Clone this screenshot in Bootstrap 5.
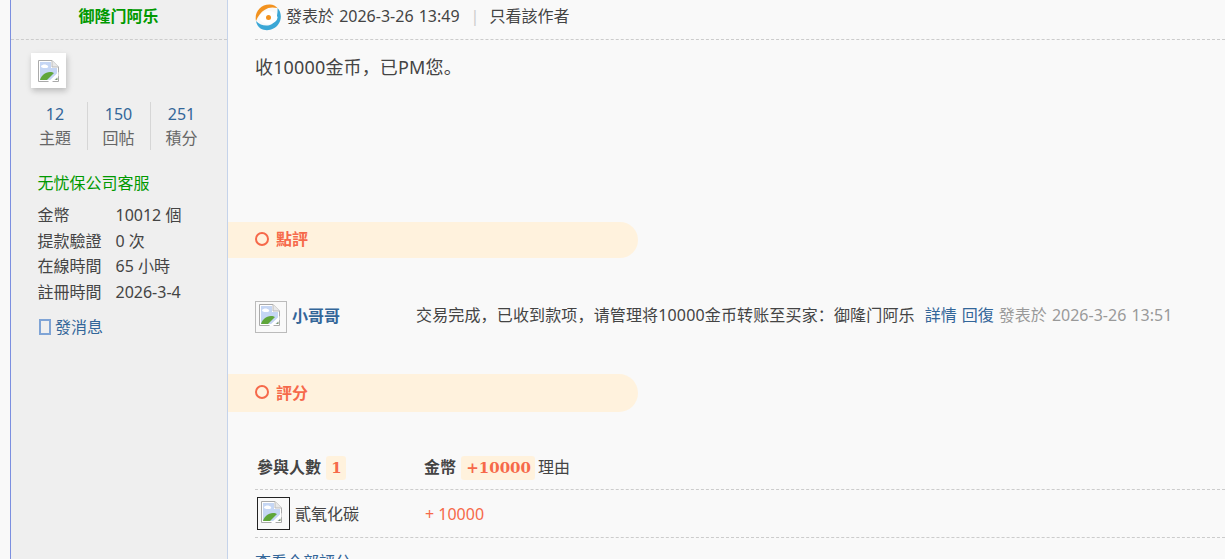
<!DOCTYPE html>
<html lang="zh-Hans"><head><meta charset="utf-8"><title>post</title>
<link href="https://cdn.jsdelivr.net/npm/bootstrap@5.3.0/dist/css/bootstrap.min.css" rel="stylesheet">
<style>
html,body{height:559px;overflow:hidden}
body{background:#f9f9f9;color:#444;font:16px/1.5 "Noto Sans","Noto Sans CJK SC",sans-serif}
a{color:#369;text-decoration:none}
.wrap{padding-left:10px;height:559px}
.side{width:218px;flex:none;background:#efefef;border-left:1px solid #7b8fe0;border-right:1px solid #c5d3ea}
.uname{height:40px;line-height:32px;border-bottom:1px dashed #ccc;color:#090;font-weight:700;text-align:center;padding-right:1px}
.avabox{width:35px;height:35px;margin:13px 0 14px 20px;background:#fff;box-shadow:1px 3px 6px rgba(0,0,0,.22);padding:7px}
.stats{padding-left:13px}
.stat{width:63px;height:48px;text-align:center;line-height:24px;color:#666;padding-right:1px}
.stat+.stat{border-left:1px solid #d6d6d6}
.stat a{display:block}
.grp{margin:21px 0 0 26.5px;color:#090;line-height:24px}
.info{margin:8px 0 0 26.5px;line-height:25.7px}
.info dt{font-weight:400;width:78px;float:left;clear:left}
.info dd{margin:0}
.pm{margin:9px 0 0 28px;display:flex;align-items:center;line-height:24px}
.pmbox{width:12px;height:16px;border:2px solid #7fa4d6;margin-right:4px}
.main{flex:1;min-width:0;padding-left:27px}
.phead{height:40px;border-bottom:1px dashed #ccc;display:flex;align-items:center;padding-bottom:8px}
.logo{flex:none;margin:4px 5px 0 0}
.ptime{word-spacing:1px}
.sep{color:#ccc;margin:0 10px 0 11px}
.msg{font-size:18px;line-height:27px;margin-top:14px;height:168px;letter-spacing:.15px}
.pill{margin-left:-27px;width:410px;height:36px;background:#fff2dd;border-radius:0 18px 18px 0;display:flex;align-items:center;padding:0 0 2px 27px;color:#f6694a;font-weight:700}
.pill2{height:38px;border-radius:0 19px 19px 0;margin-top:41px;padding-bottom:0}
.ring{width:14px;height:14px;border:2.5px solid #f6694a;border-radius:50%;margin:0 7px 1px 0}
.pill2 .ring{margin-bottom:2px}
.cmt{display:flex;align-items:center;margin-top:43px;height:32px;white-space:nowrap}
.cmt>a,.cmt>span{margin-bottom:4px}
.cava{width:32px;height:32px;border:1px solid #bbb;padding:2px 3px;margin-right:5px;flex:none}
.cname{width:124px;font-weight:700}
.cmt>.cname{margin-bottom:2px}
.ctext{letter-spacing:.15px}
.lnk1{margin-left:10px}
.lnk2{margin-left:5px}
.gray{color:#999;margin-left:5px;word-spacing:1px}
.rh{display:flex;align-items:center;height:44px;border-bottom:1px dashed #ccc;margin-top:34px;padding-left:2px;white-space:nowrap}
.rh b{color:#444}
.rc1{width:167px}
.tag{background:#fff2dd;color:#f6694a;font-family:"DejaVu Serif",serif;font-weight:700;font-size:15px;padding:3px 4px 3px 5px;margin:0 -1px 0 1px;border-radius:3px}
.rr{display:flex;align-items:center;height:48px;border-bottom:1px dashed #ccc;padding-left:2px}
.rava{width:33px;height:33px;border:1px solid #222;padding:3px;margin-right:5px;flex:none}
.rname{width:130px}
.orange{color:#f6694a}
.more{line-height:24px;margin-top:12px}
.ico{display:block}
</style></head><body>
<svg width="0" height="0" class="position-absolute"><defs><symbol id="broken" viewBox="0 0 21 22">
<path d="M.5.5H14L20.5 7v14.500H.5z" fill="#fff" stroke="#aaa"/><path d="M14 .5V7h6.500" fill="#e8e8e8" stroke="#bbb"/>
<path d="M2 2h11v6h6v12H2z" fill="#c5d6f4"/><path d="M3 6c2-2 5-2 7 0 1 2-2 2-3 2S3 8 3 6z" fill="#fff"/>
<path d="M2 20c1-4 5-8 10-8 2 0 3 .5 4 1l-7 7z" fill="#5fa63a"/><path d="M20.500 12 10 22h4l6.500-6z" fill="#fff"/><path d="M19.500 17.500V20H17z" fill="#7f9a6a"/></symbol></defs></svg>
<div class="wrap d-flex">
<aside class="side">
<div class="uname">御隆门阿乐</div>
<div class="avabox"><svg class="ico" width="21" height="22"><use href="#broken"/></svg></div>
<div class="stats d-flex">
<div class="stat"><a href="#">12</a>主題</div>
<div class="stat"><a href="#">150</a>回帖</div>
<div class="stat"><a href="#">251</a>積分</div>
</div>
<div class="grp">无忧保公司客服</div>
<dl class="info mb-0">
<dt>金幣</dt><dd>10012 個</dd>
<dt>提款驗證</dt><dd>0 次</dd>
<dt>在線時間</dt><dd>65 小時</dd>
<dt>註冊時間</dt><dd>2026-3-4</dd>
</dl>
<a class="pm" href="#"><span class="pmbox"></span>發消息</a>
</aside>
<main class="main">
<div class="phead">
<svg class="logo" width="26" height="27" viewBox="0 0 26 27">
<path d="M1 17C-1 8 6 0 15 .5c3 .2 6 1.500 7.500 3.500-5-1-9-1-13 2C6 8 3 12 1 17z" fill="#f2921f"/>
<path d="M22.500 4c4 4 4.500 11 1 16-4 6-12 8-18 4.500C3 23 1.500 20 1 17c4 4 9 5.500 14 4 5-2 8-8 7.500-17z" fill="#3ba7d6"/>
<ellipse cx="13.500" cy="13.500" rx="9" ry="6.500" fill="#fff"/><circle cx="13.500" cy="13.500" r="2.500" fill="#f2921f"/></svg>
<span class="ptime">發表於 2026-3-26 13:49</span><span class="sep">|</span><span>只看該作者</span>
</div>
<div class="msg">收10000金币，已PM您。</div>
<div class="pill"><span class="ring"></span>點評</div>
<div class="cmt">
<div class="cava"><svg class="ico" width="21" height="22"><use href="#broken"/></svg></div>
<a class="cname" href="#">小哥哥</a>
<span class="ctext">交易完成，已收到款项，请管理将10000金币转账至买家：御隆门阿乐</span>
<a class="lnk1" href="#">詳情</a><a class="lnk2" href="#">回復</a><span class="gray">發表於 2026-3-26 13:51</span>
</div>
<div class="pill pill2"><span class="ring"></span>評分</div>
<div class="rh"><div class="rc1"><b>參與人數</b> <span class="tag">1</span></div><div><b>金幣</b> <span class="tag">+10000</span> 理由</div></div>
<div class="rr"><div class="rava"><svg class="ico" width="21" height="22"><use href="#broken"/></svg></div><span class="rname">貳氧化碳</span><span class="orange">+ 10000</span></div>
<div class="more"><a href="#">查看全部評分</a></div>
</main>
</div>
</body></html>
